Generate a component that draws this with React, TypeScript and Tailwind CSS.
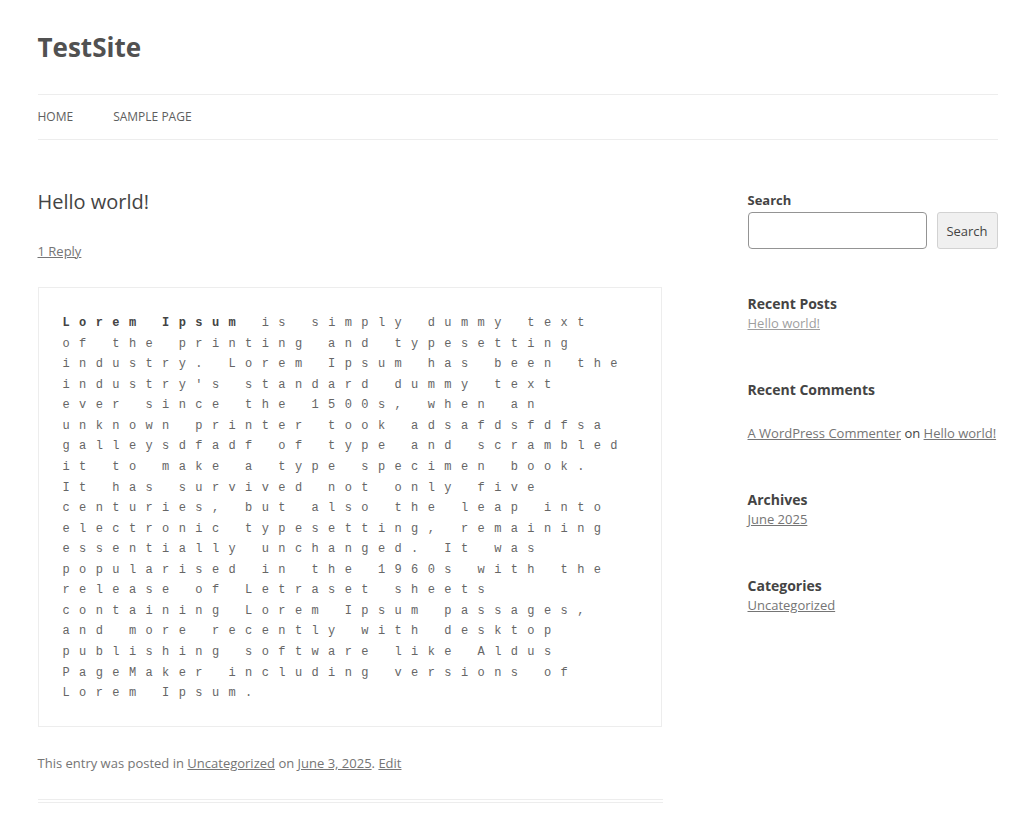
import React from "react";

const sans = { fontFamily: '"Open Sans", "Noto Sans", Arial, sans-serif' };

const loremRest =
  " is simply dummy text of the printing and typesetting industry. Lorem Ipsum has been the industry's standard dummy text ever since the 1500s, when an unknown printer took adsafdsfdfsa galleysdfadf of type and scrambled it to make a type specimen book. It has survived not only five centuries, but also the leap into electronic typesetting, remaining essentially unchanged. It was popularised in the 1960s with the release of Letraset sheets containing Lorem Ipsum passages, and more recently with desktop publishing software like Aldus PageMaker including versions of Lorem Ipsum.";

function Widget({ title, children, className = "" }: { title: string; children?: React.ReactNode; className?: string }) {
  return (
    <section className={className}>
      <h2 className="pt-[2px] text-[14px] font-bold leading-[18px] text-[#444]">{title}</h2>
      {children}
    </section>
  );
}

export default function App() {
  return (
    <div className="min-h-screen bg-white text-[#444]" style={sans}>
      <div className="mx-auto w-[960px]">
        <header className="pt-[23px]">
          <h1 className="text-[26px] font-bold leading-[48px] text-[#515151]">TestSite</h1>
          <nav className="mt-[23px] flex h-[46px] items-center border-y border-[#ededed] text-[12px] uppercase text-[#5e5e5e]">
            <a className="mr-[40px]">Home</a>
            <a>Sample Page</a>
          </nav>
        </header>

        <div className="mt-[48px] flex items-start justify-between">
          <main className="w-[625px] pt-[2px]">
            <article className="border-b-[4px] border-double border-[#ededed] pb-[24px]">
              <h1 className="text-[20px] font-normal leading-[24px] text-[#444]">Hello world!</h1>
              <div className="mt-[25px] text-[13px] leading-[24px] text-[#757575]">
                <a className="underline">1 Reply</a>
              </div>
              <pre
                className="mt-[24px] w-[624px] whitespace-pre-wrap border border-[#ededed] px-[24px] pb-[22px] pt-[25px] text-[12px] leading-[20.57px] tracking-[9.4px] text-[#666]"
                style={{ fontFamily: '"Liberation Mono", "DejaVu Sans Mono", monospace' }}
              >
                <strong className="font-bold text-[#444]">Lorem Ipsum</strong>
                {loremRest}
              </pre>
              <footer className="mt-[24px] text-[13px] leading-[24px] text-[#757575]">
                This entry was posted in <a className="underline">Uncategorized</a> on{" "}
                <a className="underline">June 3, 2025</a>. <a className="underline">Edit</a>
              </footer>
            </article>
          </main>

          <aside className="w-[250px] text-[13px] leading-[20px]">
            <section>
              <label className="block text-[13px] font-bold leading-[24px] text-[#444]">Search</label>
              <div className="flex gap-[10px]">
                <input className="h-[37px] min-w-0 flex-1 rounded-[4px] border border-[#949494] bg-white px-2 outline-none" />
                <button className="h-[37px] w-[61px] shrink-0 rounded-[3px] border border-[#d2d2d2] bg-[#f0f0f0] text-[13px] text-[#444]">
                  Search
                </button>
              </div>
            </section>

            <Widget title="Recent Posts" className="mt-[44px]">
              <a className="text-[#9f9f9f] underline">Hello world!</a>
            </Widget>

            <Widget title="Recent Comments" className="mt-[46px]">
              <p className="mt-[24px] text-[#444]">
                <a className="text-[#757575] underline">A WordPress Commenter</a> on{" "}
                <a className="text-[#757575] underline">Hello world!</a>
              </p>
            </Widget>

            <Widget title="Archives" className="mt-[46px]">
              <a className="text-[#757575] underline">June 2025</a>
            </Widget>

            <Widget title="Categories" className="mt-[46px]">
              <a className="text-[#757575] underline">Uncategorized</a>
            </Widget>
          </aside>
        </div>
      </div>
    </div>
  );
}
